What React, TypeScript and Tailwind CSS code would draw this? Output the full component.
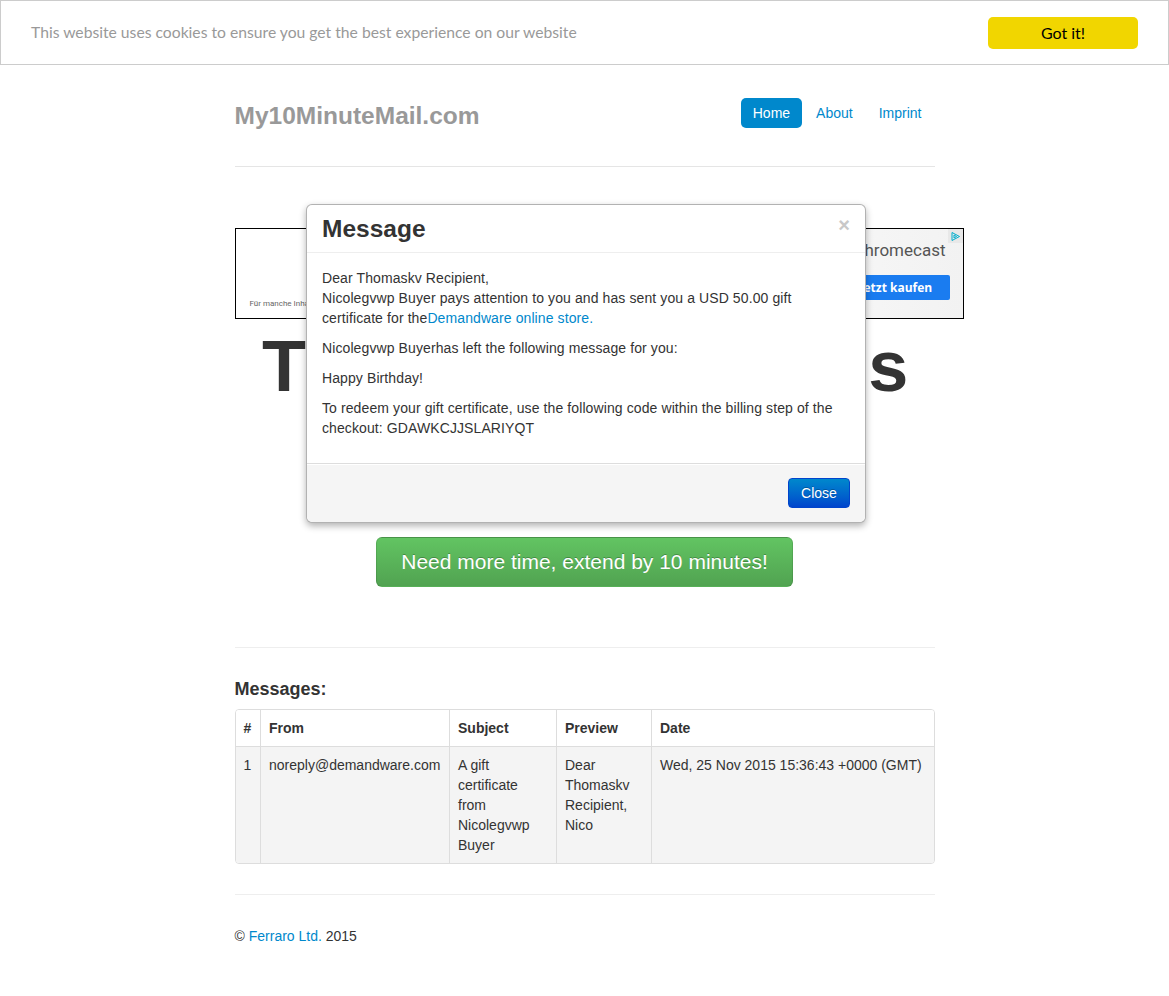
const sans = "font-['Liberation_Sans',Arial,sans-serif]";

const rows = [
  {
    id: "1",
    from: "noreply@demandware.com",
    subject: "A gift certificate from Nicolegvwp Buyer",
    preview: "Dear Thomaskv Recipient, Nico",
    date: "Wed, 25 Nov 2015 15:36:43 +0000 (GMT)",
  },
];

function CookieBar() {
  return (
    <div className="flex h-[65px] items-center justify-between border border-[#cccccc] bg-white px-[30px]">
      <span className="pt-[1px] font-['Lato',sans-serif] text-[15.7px] text-[#999999]">
        This website uses cookies to ensure you get the best experience on our website
      </span>
      <button className="h-[32px] w-[150px] rounded-[5px] bg-[#f1d600] font-['Lato',sans-serif] text-[16px] text-black">
        Got it!
      </button>
    </div>
  );
}

function Header() {
  return (
    <div className="flex items-start justify-between border-b border-[#e5e5e5] pt-[33px] pb-[32px]">
      <h3 className="text-[24.5px] leading-[36px] font-bold text-[#999999]">My10MinuteMail.com</h3>
      <ul className="mr-[1px] flex gap-[2px] text-[14px]">
        <li className="rounded-[5px] bg-[#0088cc] px-[12px] py-[8px] leading-[14px] text-white">Home</li>
        <li className="px-[12px] py-[8px] leading-[14px] text-[#0088cc]">About</li>
        <li className="px-[12px] py-[8px] leading-[14px] text-[#0088cc]">Imprint</li>
      </ul>
    </div>
  );
}

function Ad() {
  return (
    <div className="mt-[61px] flex h-[91px] w-[729px] border border-black bg-white">
      <div className="flex w-1/2 items-end px-[14px] pb-[8px]">
        <span className="font-['Roboto',sans-serif] text-[8px] text-[#666666]">
          Für manche Inhalte ist ein Abo erforderlich.
        </span>
      </div>
      <div className="relative flex w-1/2 flex-col items-end bg-gradient-to-r from-white to-[#f2f2f2] pt-[9px] pr-[13px]">
        <span className="mr-[4px] font-['Roboto',sans-serif] text-[17px] leading-[24px] text-[#555555]">
          Google chromecast
        </span>
        <span className="mt-[13px] flex h-[25px] w-[190px] items-center rounded-[2px] bg-[#1a7cf0] pl-[100px] font-['Open_Sans',sans-serif] text-[12px] font-bold text-white">
          Jetzt kaufen
        </span>
        <span className="absolute top-0 right-0 flex h-[14px] w-[15px] items-center justify-center bg-[#e8e8e8]">
          <svg width="11" height="11" viewBox="0 0 11 11">
            <path d="M2 1.5 L9.5 5.5 L2 9.5 Z M4 4 L6.5 5.5 L4 7 Z" fill="none" stroke="#00aecd" strokeWidth="1" />
          </svg>
        </span>
      </div>
    </div>
  );
}

function MessageTable() {
  return (
    <div className="overflow-hidden rounded-[4px] border border-[#dddddd]">
      <table className="w-full border-collapse text-left text-[14px] leading-[20px] text-[#333333]">
        <thead>
          <tr className="bg-white">
            <th className="w-[25px] p-[8px] font-bold">#</th>
            <th className="w-[189px] border-l border-[#dddddd] p-[8px] font-bold">From</th>
            <th className="w-[107px] border-l border-[#dddddd] p-[8px] font-bold">Subject</th>
            <th className="w-[95px] border-l border-[#dddddd] p-[8px] font-bold">Preview</th>
            <th className="border-l border-[#dddddd] p-[8px] font-bold">Date</th>
          </tr>
        </thead>
        <tbody>
          {rows.map((r) => (
            <tr key={r.id} className="border-t border-[#dddddd] bg-[#f4f4f4] align-top">
              <td className="p-[8px]">{r.id}</td>
              <td className="border-l border-[#dddddd] p-[8px]">{r.from}</td>
              <td className="border-l border-[#dddddd] p-[8px]">{r.subject}</td>
              <td className="border-l border-[#dddddd] p-[8px]">{r.preview}</td>
              <td className="border-l border-[#dddddd] p-[8px]">{r.date}</td>
            </tr>
          ))}
        </tbody>
      </table>
    </div>
  );
}

function Modal() {
  return (
    <div className="absolute top-[204px] left-[306px] w-[560px] rounded-[6px] border border-black/30 bg-white shadow-[0_3px_7px_rgba(0,0,0,0.3)]">
      <div className="flex items-start justify-between border-b border-[#eeeeee] px-[15px] py-[9px]">
        <h3 className="text-[24.5px] leading-[29px] font-bold text-[#333333]">Message</h3>
        <span className="mt-[1px] text-[20px] leading-[20px] font-bold text-[#c8c8c8]">×</span>
      </div>
      <div className="p-[15px] text-[14px] leading-[20px] tracking-[0.1px] text-[#333333]">
        <p className="mb-[10px]">
          Dear Thomaskv Recipient,
          <br />
          Nicolegvwp Buyer pays attention to you and has sent you a USD 50.00 gift certificate for the
          <span className="text-[#0088cc]">Demandware online store.</span>
        </p>
        <p className="mb-[10px]">Nicolegvwp Buyerhas left the following message for you:</p>
        <p className="mb-[10px]">Happy Birthday!</p>
        <p className="mb-[10px]">
          To redeem your gift certificate, use the following code within the billing step of the checkout: GDAWKCJJSLARIYQT
        </p>
      </div>
      <div className="flex justify-end rounded-b-[6px] border-t border-[#dddddd] bg-[#f5f5f5] px-[15px] pt-[14px] pb-[14px] shadow-[inset_0_1px_0_#ffffff]">
        <button className="h-[30px] w-[62px] rounded-[4px] border border-[#0044cc] bg-gradient-to-b from-[#0088cc] to-[#0044cc] text-[14px] text-white [text-shadow:0_-1px_0_rgba(0,0,0,0.25)]">
          Close
        </button>
      </div>
    </div>
  );
}

export default function App() {
  return (
    <div className={`relative min-h-[996px] bg-white ${sans} text-[#333333]`}>
      <CookieBar />
      <div className="mx-auto w-[700px]">
        <Header />
        <Ad />
        <h1 className="mt-[8px] text-center text-[72px] leading-[79px] font-bold tracking-[-1.3px] whitespace-nowrap text-[#333333]">
          Time left: 9:56 mins
        </h1>
        <div className="mt-[131px] flex justify-center">
          <button className="h-[50px] w-[417px] rounded-[6px] border border-black/10 bg-gradient-to-b from-[#62c462] to-[#51a351] text-[21px] text-white [text-shadow:0_-1px_0_rgba(0,0,0,0.25)]">
            Need more time, extend by 10 minutes!
          </button>
        </div>
        <hr className="mt-[60px] border-t border-[#eeeeee]" />
        <h4 className="mt-[31px] mb-[10px] text-[18px] leading-[20px] font-bold">Messages:</h4>
        <MessageTable />
        <hr className="mt-[30px] border-t border-[#eeeeee]" />
        <p className="mt-[31px] text-[14px] leading-[20px]">
          © <span className="text-[#0088cc]">Ferraro Ltd.</span> 2015
        </p>
      </div>
      <Modal />
    </div>
  );
}
